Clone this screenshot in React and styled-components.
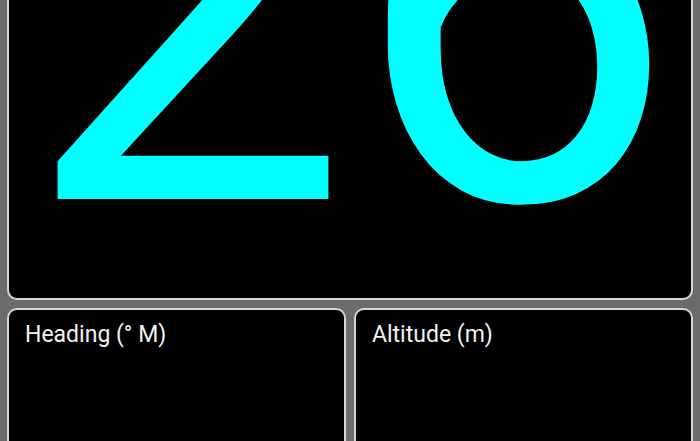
import React from 'react'
import styled, { createGlobalStyle } from 'styled-components'

const GlobalStyle = createGlobalStyle`
  html, body {
    margin: 0;
    padding: 0;
    background: #6b6b6b;
    overflow: hidden;
  }
  body {
    font-family: Roboto, 'Noto Sans', sans-serif;
  }
`

const Screen = styled.div`
  display: flex;
  flex-direction: column;
  gap: 8px;
  padding: 0 7px;
  margin-top: -110px;
`

const Panel = styled.div`
  background: #000;
  border: 2px solid #d6d6d6;
  border-radius: 10px;
  box-sizing: border-box;
  overflow: hidden;
`

const MainPanel = styled(Panel)`
  height: 410px;
  display: flex;
  flex-direction: column;
  justify-content: flex-end;
  align-items: center;
  padding-bottom: 7px;
`

const BigValue = styled.div`
  font-size: 582px;
  line-height: 1;
  color: ${p => p.color || '#00ffff'};
  white-space: nowrap;
`

const Row = styled.div`
  display: grid;
  grid-template-columns: 1fr 1fr;
  gap: 8px;
`

const SmallPanel = styled(Panel)`
  height: 200px;
  padding: 11px 16px;
`

const Label = styled.div`
  color: #f2f2f2;
  font-size: 23px;
  line-height: 28px;
`

export default function App() {
  const tiles = [
    { id: 'hdg', label: 'Heading (° M)' },
    { id: 'alt', label: 'Altitude (m)' }
  ]
  return (
    <>
      <GlobalStyle />
      <Screen>
        <MainPanel>
          <BigValue>26</BigValue>
        </MainPanel>
        <Row>
          {tiles.map(t => (
            <SmallPanel key={t.id}>
              <Label>{t.label}</Label>
            </SmallPanel>
          ))}
        </Row>
      </Screen>
    </>
  )
}
